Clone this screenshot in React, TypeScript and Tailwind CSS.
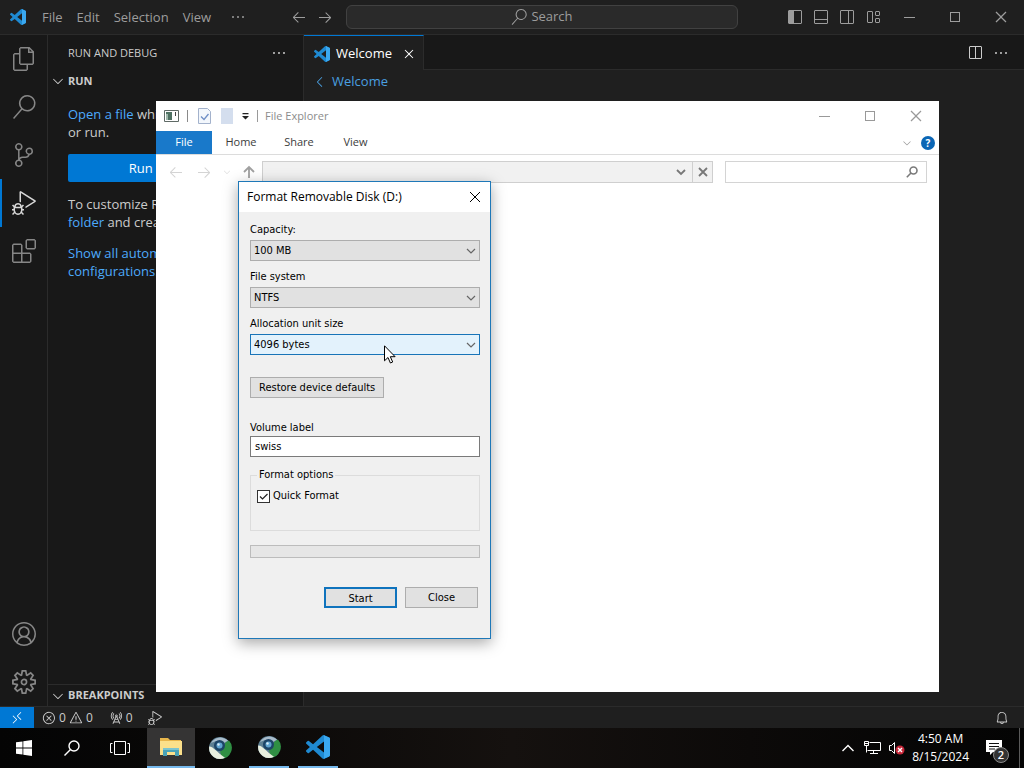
import React from 'react';
import { clsx } from 'clsx';
import {
  VscAccount,
  VscArrowLeft,
  VscArrowRight,
  VscBell,
  VscChevronDown,
  VscChevronLeft,
  VscChromeClose,
  VscChromeMaximize,
  VscChromeMinimize,
  VscClose,
  VscDebugAlt,
  VscEllipsis,
  VscError,
  VscExtensions,
  VscFiles,
  VscLayout,
  VscLayoutPanelOff,
  VscLayoutSidebarLeft,
  VscLayoutSidebarRightOff,
  VscRadioTower,
  VscRemote,
  VscSearch,
  VscSettingsGear,
  VscSourceControl,
  VscSplitHorizontal,
  VscWarning,
} from 'react-icons/vsc';

function CodeLogo({ className }: { className?: string }) {
  return (
    <svg viewBox="0 0 24 24" className={className} aria-hidden="true">
      <path
        fill="#1f8ad2"
        d="M23.15 2.587L18.21.21a1.494 1.494 0 0 0-1.705.29l-9.46 8.63-4.12-3.128a.999.999 0 0 0-1.276.057L.327 7.261A1 1 0 0 0 .326 8.74L3.899 12 .326 15.26a1 1 0 0 0 .001 1.479L1.65 17.94a.999.999 0 0 0 1.276.057l4.12-3.128 9.46 8.63a1.492 1.492 0 0 0 1.704.29l4.942-2.377A1.5 1.5 0 0 0 24 20.06V3.939a1.5 1.5 0 0 0-.85-1.352zm-5.146 14.861L10.826 12l7.178-5.448v10.896z"
      />
      <path
        fill="#3aa8f0"
        d="M18.004.15l5.146 2.437A1.5 1.5 0 0 1 24 3.939V20.06a1.5 1.5 0 0 1-.85 1.352l-5.146 2.44z"
      />
    </svg>
  );
}

function GlobeLogo() {
  return (
    <svg viewBox="0 0 24 24" className="size-6" aria-hidden="true">
      <circle cx="12" cy="12" r="11" fill="#5d7f93" />
      <path d="M12 15l6-9 3-1.500A11 11 0 0 1 14 22.800z" fill="#2f8f43" />
      <path d="M1.200 10.500C6 11 8 15.500 17 21.800A11 11 0 0 1 1.200 10.500z" fill="#e9efdf" />
      <path d="M3 7A11 11 0 0 1 20 4.600L16 7 8 5z" fill="#a9bccb" />
      <circle cx="11.500" cy="9.500" r="5.500" fill="#1d4467" />
      <circle cx="11.500" cy="9.500" r="3" fill="#5fa3cf" />
      <circle cx="10.500" cy="8.500" r="1.200" fill="#d8ecf7" />
    </svg>
  );
}

function FolderLogo() {
  return (
    <svg viewBox="0 0 24 22" className="h-[22px] w-6" aria-hidden="true">
      <path d="M1 2h8l2 2h11v15H1z" fill="#e8b64c" />
      <path d="M1 5h22v14H1z" fill="#fbe08b" />
      <path d="M4 12h16v8h-4v-4H8v4H4z" fill="#4aa3b8" />
      <path d="M4 12h16v2H4z" fill="#7cc4cf" />
    </svg>
  );
}

function WindowButton({ label, children, className }: { label: string; children: React.ReactNode; className?: string }) {
  return (
    <button aria-label={label} className={clsx('flex w-[46px] items-center justify-center', className)}>
      {children}
    </button>
  );
}

const layoutIcons = [
  { label: 'Toggle Primary Side Bar', icon: VscLayoutSidebarLeft },
  { label: 'Toggle Panel', icon: VscLayoutPanelOff },
  { label: 'Toggle Secondary Side Bar', icon: VscLayoutSidebarRightOff },
  { label: 'Customize Layout', icon: VscLayout },
];

function TitleBar() {
  return (
    <header className="flex h-[35px] shrink-0 border-b border-[#2b2b2b] bg-[#1f1f1f] text-[13px] text-[#9d9d9d]">
      <div className="flex flex-1 items-center">
        <CodeLogo className="mr-[9px] ml-[10px] size-4" />
        {['File', 'Edit', 'Selection', 'View'].map((item) => (
          <button key={item} className="px-[7px] leading-5">
            {item}
          </button>
        ))}
        <button aria-label="More menus" className="px-3">
          <VscEllipsis className="size-4" />
        </button>
      </div>
      <div className="flex items-center">
        <button aria-label="Go Back" className="px-[5px]">
          <VscArrowLeft className="size-4" />
        </button>
        <button aria-label="Go Forward" className="px-[5px]">
          <VscArrowRight className="size-4" />
        </button>
        <button className="ml-2 flex h-6 w-[392px] items-center justify-center gap-1 rounded-md border border-[#414141] bg-[#2a2a2a]">
          <VscSearch className="size-4" />
          Search
        </button>
      </div>
      <div className="flex flex-1 justify-end">
        {layoutIcons.map(({ label, icon: Icon }) => (
          <button key={label} aria-label={label} className="px-[5px]">
            <Icon className="size-4" />
          </button>
        ))}
        <WindowButton label="Minimize"><VscChromeMinimize className="size-4" /></WindowButton>
        <WindowButton label="Maximize"><VscChromeMaximize className="size-4" /></WindowButton>
        <WindowButton label="Close"><VscChromeClose className="size-4" /></WindowButton>
      </div>
    </header>
  );
}

const activities = [
  { label: 'Explorer', icon: VscFiles },
  { label: 'Search', icon: VscSearch },
  { label: 'Source Control', icon: VscSourceControl },
  { label: 'Run and Debug', icon: VscDebugAlt, active: true },
  { label: 'Extensions', icon: VscExtensions },
];

function ActivityBar() {
  return (
    <nav className="flex w-12 shrink-0 flex-col border-r border-[#2b2b2b] bg-[#181818] text-[#868686]">
      {activities.map(({ label, icon: Icon, active }) => (
        <button
          key={label}
          aria-label={label}
          className={clsx(
            'flex h-12 items-center justify-center border-x-2 border-transparent',
            active && 'border-l-[#0078d4] text-[#d7d7d7]'
          )}
        >
          <Icon className="size-6" />
        </button>
      ))}
      <button aria-label="Accounts" className="mt-auto flex h-12 items-center justify-center">
        <VscAccount className="size-6" />
      </button>
      <button aria-label="Manage" className="flex h-12 items-center justify-center">
        <VscSettingsGear className="size-6" />
      </button>
    </nav>
  );
}

function SectionHeader({ children, className }: { children: React.ReactNode; className?: string }) {
  return (
    <button className={clsx('flex h-[22px] w-full items-center gap-[2px] pl-[2px] text-[11px] font-bold text-[#cccccc]', className)}>
      <VscChevronDown className="size-4" />
      {children}
    </button>
  );
}

function SideBar() {
  return (
    <aside className="flex w-[256px] shrink-0 flex-col border-r border-[#2b2b2b] bg-[#181818] text-[#cccccc]">
      <div className="flex h-[35px] items-center justify-between pt-px pr-4 pl-5">
        <h2 className="text-[11px]">RUN AND DEBUG</h2>
        <button aria-label="Views and More Actions">
          <VscEllipsis className="size-4" />
        </button>
      </div>
      <SectionHeader>RUN</SectionHeader>
      <div className="flex flex-1 flex-col gap-[13px] overflow-hidden px-5 pt-[13px] text-[13px] leading-[18px] whitespace-nowrap">
        <p>
          <a href="#open" className="text-[#4daafc]">Open a file</a> which can debug
          <br />
          or run.
        </p>
        <button className="h-7 rounded-xs bg-[#0078d4] text-white">Run and Debug</button>
        <p>
          To customize Run open
          <br />
          <a href="#folder" className="text-[#4daafc]">folder</a> and create launch.
        </p>
        <p>
          <a href="#configs" className="text-[#4daafc]">
            Show all automatic
            <br />
            configurations
          </a>
          .
        </p>
      </div>
      <SectionHeader className="border-t border-[#2b2b2b]">BREAKPOINTS</SectionHeader>
    </aside>
  );
}

function Editor() {
  return (
    <main className="flex min-w-0 flex-1 flex-col bg-[#1f1f1f]">
      <div className="flex h-[35px] bg-[#181818]">
        <div className="flex items-center border-t border-r border-t-[#0078d4] border-r-[#2b2b2b] bg-[#1f1f1f] pt-px pr-[6px] pl-[10px] text-[13px] text-white">
          <CodeLogo className="mr-[6px] size-4" />
          Welcome
          <button aria-label="Close tab" className="ml-[9px]">
            <VscClose className="size-4" />
          </button>
        </div>
        <div className="flex flex-1 items-center justify-end gap-[10px] border-b border-[#2b2b2b] pt-px pr-[15px] text-[#cccccc]">
          <button aria-label="Split Editor">
            <VscSplitHorizontal className="size-4" />
          </button>
          <button aria-label="More Actions">
            <VscEllipsis className="size-4" />
          </button>
        </div>
      </div>
      <a href="#welcome" className="flex h-6 items-center gap-1 pl-2 text-[13px] text-[#4a9fe0]">
        <VscChevronLeft className="size-4" />
        Welcome
      </a>
    </main>
  );
}

function StatusBar() {
  return (
    <footer className="flex h-[22px] shrink-0 items-center border-t border-[#2b2b2b] bg-[#1f1f1f] text-[12px] text-[#cccccc]">
      <button aria-label="Open a Remote Window" className="flex h-full w-[34px] items-center justify-center bg-[#0078d4] text-white">
        <VscRemote className="size-[14px]" />
      </button>
      <button className="flex items-center gap-[3px] pl-2">
        <VscError className="size-[14px]" />0
        <VscWarning className="size-[14px]" />0
      </button>
      <button className="flex items-center gap-[3px] pl-4">
        <VscRadioTower className="size-[14px]" />0
      </button>
      <button aria-label="Select debug configuration" className="pl-[15px]">
        <VscDebugAlt className="size-[14px]" />
      </button>
      <button aria-label="Notifications" className="mr-[15px] ml-auto">
        <VscBell className="size-[14px]" />
      </button>
    </footer>
  );
}

function TaskButton({ label, children, className }: { label: string; children: React.ReactNode; className?: string }) {
  return (
    <button aria-label={label} className={clsx('flex w-12 items-center justify-center', className)}>
      {children}
    </button>
  );
}

function RunningMark({ children }: { children: React.ReactNode }) {
  return <span className="flex h-full w-10 items-center justify-center border-b-2 border-[#76b9ed]">{children}</span>;
}

function Taskbar() {
  return (
    <footer className="flex h-10 shrink-0 bg-linear-to-r from-[#040404] via-[#15110f] to-[#040404] text-white">
      <TaskButton label="Start">
        <svg viewBox="0 0 16 16" className="size-4" fill="currentColor">
          <path d="M0 2.300L6.500 1.400v6.200H0zM7.300 1.300L16 0v7.600H7.300zM0 8.400h6.500v6.200L0 13.700zM7.300 8.400H16V16l-8.700-1.300z" />
        </svg>
      </TaskButton>
      <TaskButton label="Search">
        <svg viewBox="0 0 16 16" className="size-4" fill="none" stroke="currentColor" strokeWidth="1.400">
          <circle cx="10" cy="6" r="5" />
          <path d="M6.500 9.500L.5 15.500" />
        </svg>
      </TaskButton>
      <TaskButton label="Task View">
        <svg viewBox="0 0 20 16" className="h-4 w-5" fill="none" stroke="currentColor">
          <path d="M4.500 1.500h11v13h-11zM2.500 3.500h-2v9h2M17.500 3.500h2v9h-2" />
        </svg>
      </TaskButton>
      <TaskButton label="File Explorer" className="ml-[3px] border-b-2 border-[#76b9ed] bg-[#353434]">
        <FolderLogo />
      </TaskButton>
      <TaskButton label="Browser" className="ml-px">
        <GlobeLogo />
      </TaskButton>
      <TaskButton label="Browser window" className="ml-px">
        <RunningMark><GlobeLogo /></RunningMark>
      </TaskButton>
      <TaskButton label="Visual Studio Code" className="ml-px">
        <RunningMark><CodeLogo className="size-6" /></RunningMark>
      </TaskButton>
      <div className="ml-auto flex items-center">
        <button aria-label="Show hidden icons">
          <svg viewBox="0 0 12 12" className="size-3" fill="none" stroke="currentColor" strokeWidth="1.400">
            <path d="M.5 9L6 3.500 11.500 9" />
          </svg>
        </button>
        <button aria-label="Network" className="ml-[10px]">
          <svg viewBox="0 0 17 14" className="h-[14px] w-[17px]" fill="none" stroke="currentColor">
            <path d="M5.500 1.500h11v8H3.500M.5.5h4v4h-4zM2.500 4.500v7M9.500 9.500v3M6 12.500h8M1 2.500h3" />
          </svg>
        </button>
        <button aria-label="Volume muted" className="ml-[7px]">
          <svg viewBox="0 0 17 14" className="h-[14px] w-[17px]">
            <path d="M1.500 4.500h2L6.500 1.500v11L3.500 9.500h-2z" fill="none" stroke="currentColor" />
            <circle cx="12" cy="9" r="4.500" fill="#c8283a" />
            <path d="M10 7l4 4M14 7l-4 4" stroke="white" strokeWidth="1.400" />
          </svg>
        </button>
        <div className="ml-[7px] text-center text-[12px] leading-[18px]">
          <div>4:50 AM</div>
          <div>8/15/2024</div>
        </div>
        <button aria-label="2 new notifications" className="mt-[5px] ml-4">
          <svg viewBox="0 0 26 26" className="size-[26px]" aria-hidden="true">
            <path d="M1 2h16v12H8l-3 3v-3H1z" fill="white" />
            <path d="M4 5.500h10M4 8.500h10M4 11h6" stroke="#111" />
            <circle cx="16" cy="17" r="7.500" fill="#333" stroke="#8a8a8a" />
            <text x="16" y="21" textAnchor="middle" fontSize="11" fontWeight="600" fill="white">2</text>
          </svg>
        </button>
        <span className="ml-2 h-10 w-[5px] border-l border-[#5a5a5a]" />
      </div>
    </footer>
  );
}

function ExplorerWindow() {
  return (
    <section
      aria-label="File Explorer"
      className="absolute top-[101px] left-[156px] flex h-[591px] w-[783px] flex-col bg-white font-['Open_Sans','Noto_Sans',sans-serif] text-[11px] text-[#3c3c3c]"
    >
      <div className="flex h-[30px] items-center pl-2">
        <svg viewBox="0 0 16 14" className="h-[14px] w-4" aria-hidden="true">
          <path d="M.5 1.500h14v11H.5z" fill="white" stroke="#5f6a66" />
          <path d="M2 3h6v8H2z" fill="#4f7263" />
          <path d="M2 5h2v6H2z" fill="#9fb8ac" />
          <path d="M11.500 3v4" stroke="#444" />
        </svg>
        <span className="ml-[7px] h-3 border-l border-[#8a8a8a]" />
        <button aria-label="Properties" className="ml-[10px]">
          <svg viewBox="0 0 13 16" className="h-4 w-[13px]">
            <path d="M.5.500h9l3 3v12H.5z" fill="#f3f7fc" stroke="#a3b2cc" />
            <path d="M3 8.500l3 3 4.500-5.500" fill="none" stroke="#6f8fc6" strokeWidth="1.300" />
          </svg>
        </button>
        <button aria-label="New folder" className="ml-[10px] h-4 w-3 bg-[#d4deee]" />
        <button aria-label="Customize Quick Access Toolbar" className="ml-[8px]">
          <svg viewBox="0 0 9 8" className="h-2 w-[9px]" fill="#222">
            <path d="M1.500 1h6v1.200h-6zM1 4h7L4.500 7.500z" />
          </svg>
        </button>
        <span className="ml-[7px] h-3 border-l border-[#9a9a9a]" />
        <h1 className="ml-[7px] text-[#8c8c8c]">File Explorer</h1>
        <div className="ml-auto flex self-stretch text-[#999]">
          <WindowButton label="Minimize"><VscChromeMinimize className="size-4" /></WindowButton>
          <WindowButton label="Maximize"><VscChromeMaximize className="size-4" /></WindowButton>
          <WindowButton label="Close"><VscChromeClose className="size-4" /></WindowButton>
        </div>
      </div>
      <div className="flex h-6 border-b border-[#dcdcdc]">
        <button className="w-14 bg-[#1979ca] text-white">File</button>
        <button className="w-[58px]">Home</button>
        <button className="w-[58px]">Share</button>
        <button className="w-[55px]">View</button>
        <button aria-label="Expand the Ribbon" className="ml-auto text-[#9a9a9a]">
          <VscChevronDown className="size-3" />
        </button>
        <button aria-label="Help" className="mr-1 ml-2 size-[14px] self-center rounded-full bg-[#0b66b5] text-[10px] leading-[14px] font-bold text-white">
          ?
        </button>
      </div>
      <div className="flex h-[34px] items-center px-3">
        <button aria-label="Back" className="text-[#d4d4d4]"><VscArrowLeft className="size-4" /></button>
        <button aria-label="Forward" className="ml-3 text-[#d4d4d4]"><VscArrowRight className="size-4" /></button>
        <button aria-label="Recent locations" className="ml-[10px] text-[#dddddd]"><VscChevronDown className="size-[10px]" /></button>
        <button aria-label="Up" className="ml-[10px] text-[#a0a0a0]">
          <svg viewBox="0 0 14 14" className="size-[14px]" fill="none" stroke="currentColor" strokeWidth="1.800">
            <path d="M7 13V2M2 7l5-5 5 5" />
          </svg>
        </button>
        <div className="ml-[6px] flex h-[22px] flex-1 items-center border border-[#cfcfcf] bg-[#f1f1f1] text-[#777]">
          <input aria-label="Address" className="h-full min-w-0 flex-1 bg-transparent px-2 outline-none" />
          <button aria-label="Previous locations" className="mr-1 p-[2px]">
            <svg viewBox="0 0 10 10" className="size-[10px]" fill="none" stroke="currentColor" strokeWidth="1.800">
              <path d="M1 3l4 4 4-4" />
            </svg>
          </button>
          <button aria-label="Stop" className="flex h-full w-5 items-center justify-center border-l border-[#cfcfcf]">
            <svg viewBox="0 0 10 10" className="size-[10px]" fill="none" stroke="currentColor" strokeWidth="1.800">
              <path d="M1 1l8 8M9 1L1 9" />
            </svg>
          </button>
        </div>
        <div className="ml-3 flex h-[22px] w-[202px] items-center border border-[#d4d4d4] pr-2 text-[#7a7a7a]">
          <input aria-label="Search" className="h-full min-w-0 flex-1 px-2 outline-none" />
          <svg viewBox="0 0 12 12" className="size-3" fill="none" stroke="currentColor" strokeWidth="1.600">
            <circle cx="7.500" cy="4.500" r="3.500" />
            <path d="M5 7L.8 11.200" />
          </svg>
        </div>
      </div>
    </section>
  );
}

interface FieldProps {
  id: string;
  label: string;
  value: string;
  focused?: boolean;
}

function SelectField({ id, label, value, focused }: FieldProps) {
  return (
    <div className="grid gap-[2px]">
      <label htmlFor={id} className="leading-4">{label}</label>
      <div className="grid items-center">
        <select
          id={id}
          className={clsx(
            'col-start-1 row-start-1 h-[21px] appearance-none border px-[3px] pt-[2px] outline-none',
            focused ? 'border-[#1874b8] bg-[#e3f2fc]' : 'border-[#adadad] bg-[#e1e1e1]'
          )}
        >
          <option>{value}</option>
        </select>
        <svg
          viewBox="0 0 10 10"
          className="pointer-events-none col-start-1 row-start-1 mr-1 size-[10px] justify-self-end text-[#666]"
          fill="none"
          stroke="currentColor"
          strokeWidth="1.200"
        >
          <path d="M1 3l4 4 4-4" />
        </svg>
      </div>
    </div>
  );
}

function FormatDialog() {
  return (
    <section
      role="dialog"
      aria-labelledby="format-title"
      className="absolute top-[181px] left-[238px] w-[253px] border border-[#1e78b8] bg-[#f0f0f0] font-['DejaVu_Sans_Condensed','Noto_Sans',sans-serif] text-[11px] text-black shadow-[0_4px_14px_rgba(0,0,0,0.35)]"
    >
      <div className="flex h-[30px] items-center justify-between bg-white pr-[9px] pl-2">
        <h2 id="format-title" className="font-['Open_Sans','Noto_Sans',sans-serif] text-[12px]">Format Removable Disk (D:)</h2>
        <button aria-label="Close dialog">
          <svg viewBox="0 0 12 12" className="size-3" fill="none" stroke="currentColor">
            <path d="M1 1l10 10M11 1L1 11" />
          </svg>
        </button>
      </div>
      <form className="pt-[10px] pr-[10px] pb-[30px] pl-[11px]" onSubmit={(e) => e.preventDefault()}>
        <div className="grid gap-2">
          <SelectField id="capacity" label="Capacity:" value="100 MB" />
          <SelectField id="file-system" label="File system" value="NTFS" />
          <SelectField id="unit-size" label="Allocation unit size" value="4096 bytes" focused />
        </div>
        <button type="button" className="mt-[22px] block h-[21px] border border-[#adadad] bg-[#e1e1e1] px-2 pt-[2px]">
          Restore device defaults
        </button>
        <label htmlFor="volume" className="mt-[22px] block leading-4">Volume label</label>
        <input id="volume" defaultValue="swiss" className="block h-[21px] w-full border border-[#7a7a7a] bg-white px-1 outline-none" />
        <fieldset className="mt-[10px] h-16 border border-[#dcdcdc] px-[6px]">
          <legend className="px-[2px] leading-4">Format options</legend>
          <label className="mt-[5px] flex items-center gap-[3px] leading-4">
            <span className="grid">
              <input type="checkbox" defaultChecked className="col-start-1 row-start-1 size-[13px] appearance-none border border-[#333] bg-white" />
              <svg viewBox="0 0 13 13" className="pointer-events-none col-start-1 row-start-1 size-[13px]" fill="none" stroke="#222" strokeWidth="1.200">
                <path d="M3 6.500l2.500 2.500L10.500 4" />
              </svg>
            </span>
            Quick Format
          </label>
        </fieldset>
        <div role="progressbar" aria-label="Format progress" className="mt-[14px] h-[13px] border border-[#bcbcbc] bg-[#e6e6e6]" />
        <div className="mt-[29px] flex justify-end gap-2 pr-[2px]">
          <button type="submit" className="h-[21px] w-[73px] border-2 border-[#0f73bd] bg-[#e1e1e1] pt-[2px]">Start</button>
          <button type="button" className="h-[21px] w-[73px] border border-[#adadad] bg-[#e1e1e1] pt-[2px]">Close</button>
        </div>
      </form>
    </section>
  );
}

export default function App() {
  return (
    <div className="relative flex h-screen flex-col overflow-hidden bg-[#1f1f1f] font-['Open_Sans','Noto_Sans',sans-serif]">
      <TitleBar />
      <div className="flex min-h-0 flex-1">
        <ActivityBar />
        <SideBar />
        <Editor />
      </div>
      <StatusBar />
      <Taskbar />
      <ExplorerWindow />
      <FormatDialog />
      <svg viewBox="0 0 12 19" className="pointer-events-none absolute top-[345px] left-[384px] h-[19px] w-3" aria-hidden="true">
        <path d="M.5.800v15l3.500-3.300 2.400 5.500 2.300-1-2.400-5.300h4.800z" fill="white" stroke="black" />
      </svg>
    </div>
  );
}
